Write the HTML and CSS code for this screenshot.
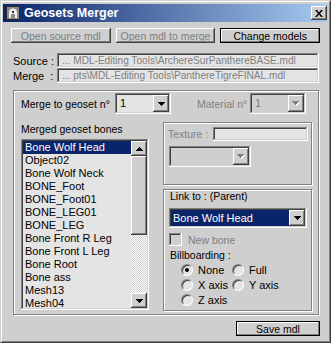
FILE: index.html
```html
<!DOCTYPE html>
<html>
<head>
<meta charset="utf-8">
<title>Geosets Merger</title>
<link rel="stylesheet" href="styles.css">
</head>
<body>
<div class="win">
  <div class="frame">
    <div class="titlebar">
      <svg class="appicon" viewBox="0 0 16 16" width="16" height="16">
        <rect x="1.5" y="1.5" width="13" height="13" fill="#8c8c8c" stroke="#2a2a2a"/>
        <path d="M4 13V7.5C4 5 5.8 3.5 8 3.5S12 5 12 7.5V13H10V9H6V13Z" fill="#f0f0f0"/>
        <rect x="7" y="6" width="2" height="2" fill="#333"/>
      </svg>
      <span class="title">Geosets Merger</span>
      <div class="close raised">
        <svg width="8" height="7" viewBox="0 0 8 7"><path d="M0 0h2l2 2.4 2-2.4h2l-3 3.5 3 3.5h-2l-2-2.4-2 2.4h-2l3-3.5z" fill="#000"/></svg>
      </div>
    </div>
    <div class="content">
      <div class="btnrow">
        <div class="btn raised off">Open source mdl</div>
        <div class="btn raised off">Open mdl to merge</div>
        <div class="btn def">Change models</div>
      </div>
      <div class="files">
        <div class="filerow"><span class="flabel">Source :</span><div class="field sunken">... MDL-Editing Tools\ArchereSurPanthereBASE.mdl</div></div>
        <div class="filerow"><span class="flabel">Merge &nbsp;:</span><div class="field sunken">... pts\MDL-Editing Tools\PanthereTigreFINAL.mdl</div></div>
      </div>
      <div class="panel etched">
        <div class="toprow">
          <span class="lbl w94">Merge to geoset n°</span>
          <div class="combo c56 sunken">
            <div class="val">1</div>
            <div class="ddbtn raised"><svg width="7" height="4" viewBox="0 0 7 4"><path d="M0 0h7v1h-1v1h-1v1h-1v1h-1v-1h-1v-1h-1v-1h-1z" fill="#000"/></svg></div>
          </div>
          <span class="lbl dis mat">Material n°</span>
          <div class="combo c56 sunken dcombo">
            <div class="val">1</div>
            <div class="ddbtn raised"><svg width="8" height="5" viewBox="0 0 8 5"><path d="M1 1h7v1h-1v1h-1v1h-1v1h-1v-1h-1v-1h-1v-1h-1z" fill="#fff"/><path d="M0 0h7v1h-1v1h-1v1h-1v1h-1v-1h-1v-1h-1v-1h-1z" fill="#808080"/></svg></div>
          </div>
        </div>
        <div class="cols">
          <div class="leftcol">
            <div class="lbl bones">Merged geoset bones</div>
            <div class="listbox sunken">
              <ul class="items">
                <li class="sel">Bone Wolf Head</li>
                <li>Object02</li>
                <li>Bone Wolf Neck</li>
                <li>BONE_Foot</li>
                <li>BONE_Foot01</li>
                <li>BONE_LEG01</li>
                <li>BONE_LEG</li>
                <li>Bone Front R Leg</li>
                <li>Bone Front L Leg</li>
                <li>Bone Root</li>
                <li>Bone ass</li>
                <li>Mesh13</li>
                <li>Mesh04</li>
              </ul>
              <div class="vscroll">
                <div class="sbtn raised"><svg width="7" height="4" viewBox="0 0 7 4"><path d="M3 0h1v1h1v1h1v1h1v1h-7v-1h1v-1h1v-1h1z" fill="#000"/></svg></div>
                <div class="thumb raised"></div>
                <div class="track"></div>
                <div class="sbtn raised"><svg width="7" height="4" viewBox="0 0 7 4"><path d="M0 0h7v1h-1v1h-1v1h-1v1h-1v-1h-1v-1h-1v-1h-1z" fill="#000"/></svg></div>
              </div>
            </div>
          </div>
          <div class="rightcol">
            <div class="group etched tex">
              <div class="texrow">
                <span class="lbl dis texlbl">Texture :</span>
                <div class="texfield sunken"></div>
              </div>
              <div class="combo sunken dcombo texcombo">
                <div class="val"></div>
                <div class="ddbtn raised"><svg width="8" height="5" viewBox="0 0 8 5"><path d="M1 1h7v1h-1v1h-1v1h-1v1h-1v-1h-1v-1h-1v-1h-1z" fill="#fff"/><path d="M0 0h7v1h-1v1h-1v1h-1v1h-1v-1h-1v-1h-1v-1h-1z" fill="#808080"/></svg></div>
              </div>
            </div>
            <div class="group etched link">
              <div class="lbl linklbl">Link to : (Parent)</div>
              <div class="combo sunken linkcombo">
                <div class="val selval">Bone Wolf Head</div>
                <div class="ddbtn raised"><svg width="7" height="4" viewBox="0 0 7 4"><path d="M0 0h7v1h-1v1h-1v1h-1v1h-1v-1h-1v-1h-1v-1h-1z" fill="#000"/></svg></div>
              </div>
              <div class="chkrow">
                <div class="chk sunken"></div>
                <span class="lbl dis">New bone</span>
              </div>
              <div class="lbl bill">Billboarding :</div>
              <div class="radios">
                <div class="ritem"><span class="radio on"></span><span>None</span></div>
                <div class="ritem"><span class="radio"></span><span>Full</span></div>
                <div class="ritem"><span class="radio"></span><span>X axis</span></div>
                <div class="ritem"><span class="radio"></span><span>Y axis</span></div>
                <div class="ritem"><span class="radio"></span><span>Z axis</span></div>
              </div>
            </div>
          </div>
        </div>
      </div>
      <div class="footer">
        <div class="btn def save">Save mdl</div>
      </div>
    </div>
  </div>
</div>
</body>
</html>
```
FILE: styles.css
```css
* { box-sizing: border-box; margin: 0; padding: 0; }
html, body { width: 331px; height: 343px; overflow: hidden; }
body {
  font-family: "Liberation Sans", Arial, sans-serif;
  font-size: 10.5px;
  color: #000;
  background: #cfcfcf;
}
.win {
  width: 331px;
  height: 343px;
  border: 1px solid;
  border-color: #cfcfcf #404040 #404040 #cfcfcf;
  background: #cfcfcf;
}
.frame {
  height: 100%;
  border: 1px solid;
  border-color: #fff #808080 #808080 #fff;
  padding: 2px 1px 1px 1px;
  display: flex;
  flex-direction: column;
}
.titlebar {
  height: 18px;
  flex: none;
  display: flex;
  align-items: center;
  background: linear-gradient(to right, #0a246a, #a6caf0);
  padding-left: 2px;
}
.appicon { flex: none; }
.title {
  margin-left: 3px;
  color: #fff;
  font-weight: bold;
  font-size: 12.5px;
  flex: 1;
}
.close {
  width: 16px;
  height: 14px;
  margin-right: 1px;
  display: flex;
  align-items: center;
  justify-content: center;
}
.raised {
  background: #cfcfcf;
  box-shadow: inset -1px -1px #404040, inset 1px 1px #fff, inset -2px -2px #808080, inset 2px 2px #cfcfcf;
}
.sunken {
  box-shadow: inset -1px -1px #fff, inset 1px 1px #808080, inset -2px -2px #cfcfcf, inset 2px 2px #404040;
}
.content {
  padding: 6px 8px 0 8px;
  flex: 1;
  display: flex;
  flex-direction: column;
}
.btnrow {
  display: grid;
  grid-template-columns: repeat(3, 1fr);
  gap: 5px;
  height: 15px;
}
.btn {
  display: flex;
  align-items: center;
  justify-content: center;
  height: 15px;
  white-space: nowrap;
  font-size: 10.5px;
  overflow: hidden;
}
.btn.off { color: #808080; }
.btn.def {
  background: #cfcfcf;
  box-shadow: inset 0 0 0 1px #000, inset -2px -2px #808080, inset 2px 2px #fff;
}
.files { margin-top: 10px; }
.filerow {
  display: flex;
  height: 15px;
  align-items: center;
}
.flabel {
  width: 46px;
  padding-left: 2px;
  white-space: nowrap;
  font-size: 11px;
}
.field {
  height: 15px;
  width: 262px;
  background-color: #e4e4e4;
  color: #808080;
  padding: 1px 0 0 5px;
  line-height: 13px;
  white-space: nowrap;
  overflow: hidden;
  font-size: 10.1px;
}
.etched {
  border: 1px solid #808080;
  box-shadow: inset 1px 1px #fff, 1px 1px #fff;
}
.panel {
  margin: 7px 0 0 2px;
  width: 306px;
  height: 225px;
  flex: none;
  padding: 2px 0 0 7px;
}
.lbl { white-space: nowrap; }
.dis { color: #808080; }
.toprow {
  display: flex;
  height: 21px;
  align-items: center;
}
.w94 { width: 94px; }
.combo {
  display: flex;
  height: 21px;
  padding: 2px;
}
.c56 { width: 56px; }
.combo .val {
  flex: 1;
  background: #e4e4e4;
  padding-left: 3px;
  line-height: 17px;
  overflow: hidden;
  white-space: nowrap;
  font-size: 11px;
}
.dcombo .val { background: #cfcfcf; color: #808080; }
.ddbtn {
  width: 16px;
  height: 17px;
  flex: none;
  display: flex;
  align-items: center;
  justify-content: center;
}
.mat { margin-left: 26px; width: 53px; }
.cols { display: flex; }
.leftcol { width: 128px; flex: none; }
.bones { margin-top: 9px; line-height: 13px; }
.listbox {
  margin-top: 3px;
  height: 171px;
  padding: 2px;
  display: flex;
}
.items {
  list-style: none;
  flex: 1;
  background: #e4e4e4;
  overflow: hidden;
  font-size: 11px;
}
.items li {
  height: 13px;
  line-height: 13px;
  padding-left: 2px;
  white-space: nowrap;
}
.items li.sel { background: #0a246a; color: #fff; }
.vscroll {
  width: 16px;
  display: flex;
  flex-direction: column;
}
.sbtn {
  height: 15px;
  flex: none;
  display: flex;
  align-items: center;
  justify-content: center;
}
.thumb { height: 79px; flex: none; }
.track {
  flex: 1;
  background: repeating-conic-gradient(#fff 0 25%, #cfcfcf 0 50%) 0 0 / 2px 2px;
}
.rightcol {
  margin-left: 14px;
  margin-top: 8px;
  width: 150px;
  flex: none;
}
.group { width: 149px; }
.tex {
  height: 63px;
  padding: 4px 0 0 4px;
}
.texrow {
  display: flex;
  height: 14px;
  align-items: center;
}
.texlbl { width: 45px; }
.texfield {
  width: 95px;
  height: 14px;
  background-color: #e4e4e4;
}
.texcombo {
  margin-top: 5px;
  margin-left: 1px;
  width: 82px;
}
.link {
  margin-top: 4px;
  height: 122px;
  padding: 0 0 0 5px;
}
.linklbl { margin-left: 1px; line-height: 13px; }
.linkcombo {
  margin-top: 5px;
  width: 138px;
  height: 20px;
}
.linkcombo .ddbtn { height: 16px; }
.linkcombo .val.selval {
  background: #0a246a;
  color: #fff;
  line-height: 16px;
  padding-left: 2px;
}
.chkrow {
  margin-top: 5px;
  display: flex;
  align-items: center;
  height: 13px;
  gap: 6px;
}
.chk {
  width: 13px;
  height: 13px;
  background-color: #cfcfcf;
}
.bill { margin-top: 3px; margin-left: 1px; line-height: 13px; }
.radios {
  margin-top: 1px;
  padding-left: 12px;
  display: grid;
  grid-template-columns: 51px auto;
  grid-auto-rows: 14px;
  row-gap: 1px;
}
.ritem {
  display: flex;
  align-items: center;
  gap: 5px;
  font-size: 11px;
}
.radio {
  width: 12px;
  height: 12px;
  flex: none;
  border-radius: 50%;
  background: #e4e4e4;
  border: 1px solid;
  border-color: #808080 #fff #fff #808080;
  box-shadow: inset 1px 1px #404040;
  position: relative;
}
.radio.on::after {
  content: "";
  position: absolute;
  left: 3px;
  top: 3px;
  width: 4px;
  height: 4px;
  border-radius: 50%;
  background: #000;
}
.footer {
  margin-top: 6px;
  display: flex;
  justify-content: flex-end;
}
.save { width: 84px; }
```
